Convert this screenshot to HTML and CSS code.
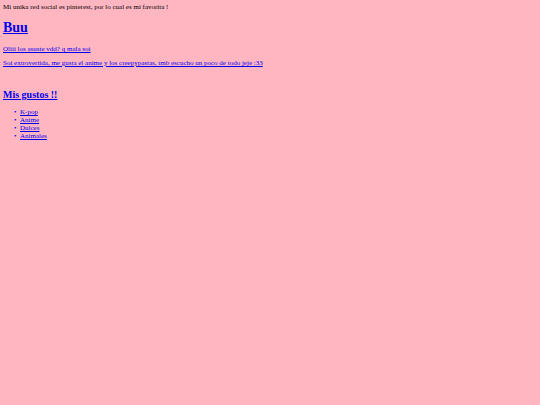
FILE: index.html
```
<!DOCTYPE html>
<html lang="es">
<head>
    <meta charset="UTF-8">
    <meta name="viewport" content="width=device-width, initial-scale=1.0">
    <title>Buu</title>
    <link rel="stylesheet" href="styles.css">
</head>
<body>
    <div class="intro">Mi unika red social es pinterest, por lo cual es mi favorita !</div>
    <a class="perfil" href="https://www.pinterest.com">
        <h1>Buu</h1>
        <p>Oliii los asuste vdd? q mala soi</p>
        <p>Soi extrovertida, me gusta el anime y los creepypastas, tmb escucho un poco de todo jeje :33</p>
        <h2>Mis gustos !!</h2>
        <ul>
            <li>K-pop</li>
            <li>Anime</li>
            <li>Dulces</li>
            <li>Animales</li>
        </ul>
    </a>
</body>
</html>
```

FILE: styles.css
```
body {
    margin: 3px;
    background-color: #ffb6c1;
    color: #000;
    font-family: "Liberation Serif", "Times New Roman", serif;
    font-size: 7px;
    line-height: 8px;
}
.perfil {
    display: block;
    color: #0000ee;
    text-decoration: underline;
}
h1 {
    margin: 9px 0;
    font-size: 14px;
    line-height: 16px;
}
p {
    margin: 6px 0;
}
h2 {
    margin: 22px 0 7px;
    font-size: 10px;
    line-height: 12px;
}
ul {
    margin: 7px 0;
    padding-left: 17px;
}
li::marker {
    content: "•\00a0\00a0";
}
```
